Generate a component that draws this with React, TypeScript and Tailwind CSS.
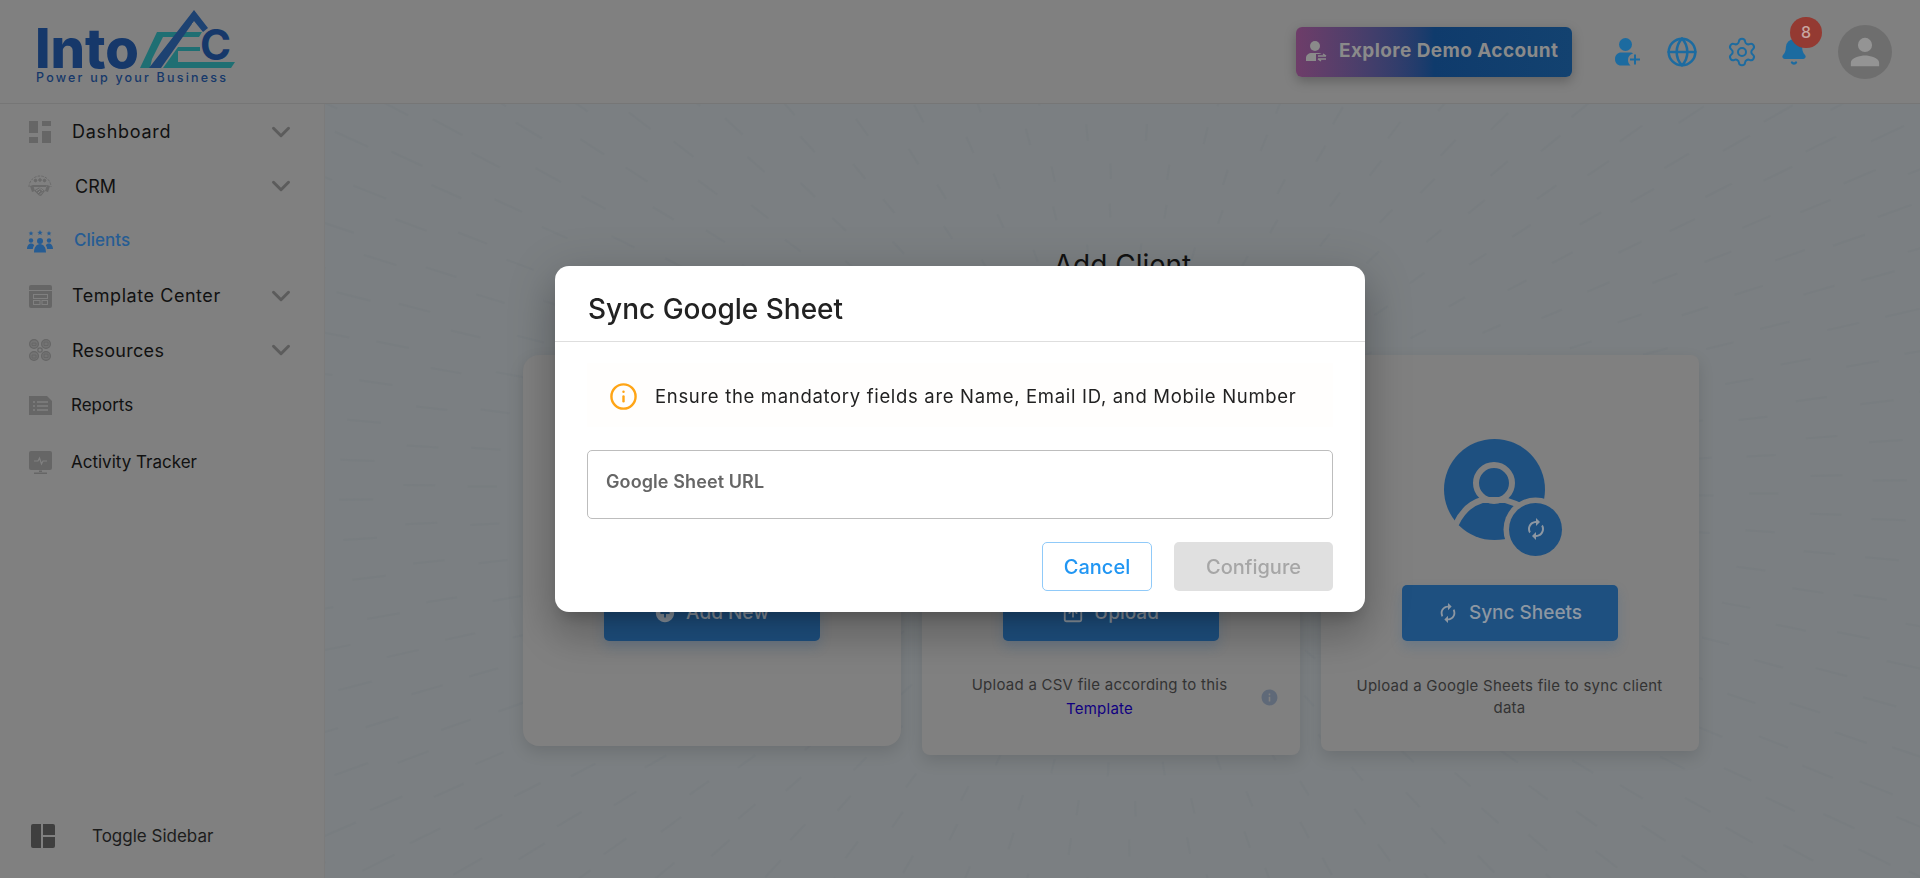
import React from "react";
import { ChevronDown, Globe, Settings, Bell, Info, SquareArrowUp } from "lucide-react";
import { MdSync, MdAddCircle, MdInfo } from "react-icons/md";

function DashIcon() {
  return (
    <svg viewBox="0 0 22 22" className="w-[22px] h-[22px]" fill="#666">
      <rect x="0" y="0" width="9" height="12" />
      <rect x="13" y="0" width="9" height="5" />
      <rect x="0" y="16" width="9" height="6" />
      <rect x="13" y="10" width="9" height="12" />
    </svg>
  );
}

function CrmIcon() {
  return (
    <svg viewBox="0 0 26 26" className="w-[26px] h-[26px]" fill="none" stroke="#6a6a6a" strokeWidth="1">
      <path d="M2 14a11 11 0 0 1 22 0" strokeDasharray="2.5 1.200" />
      <circle cx="8.500" cy="7.500" r="1.300" fill="#6a6a6a" />
      <circle cx="13" cy="7" r="1.300" fill="#6a6a6a" />
      <circle cx="17.500" cy="7.500" r="1.300" fill="#6a6a6a" />
      <path d="M6 12h14v2H6zM3 13l3-1 2 6-3 1zM23 13l-3-1-2 6 3 1z" fill="#6a6a6a" stroke="none" />
      <path d="M8 17l4-2.500 2 .5 4 3-4 5-2-.5-4-4z" fill="#6a6a6a" stroke="none" />
      <path d="M9 18l4-2.500 3 2.500M11 20l2-2M13 21.500l2-2" stroke="#8c8c8c" strokeWidth="0.800" />
    </svg>
  );
}

function ClientsIcon() {
  return (
    <svg viewBox="0 0 26 26" className="w-[26px] h-[26px]" fill="#265c93">
      <path d="M4 4l.7 1.600 1.700.1-1.300 1.100.4 1.700L4 7.600l-1.500.9.4-1.700L1.600 5.700l1.700-.1zM13 3l.8 1.800 1.900.1-1.500 1.200.5 1.900-1.700-1-1.700 1 .5-1.900-1.500-1.200 1.900-.1zM22 4l.7 1.600 1.700.1-1.300 1.100.4 1.700-1.500-.9-1.500.9.4-1.700-1.300-1.100 1.700-.1z" />
      <circle cx="4" cy="13.500" r="2.200" />
      <circle cx="22" cy="13.500" r="2.200" />
      <circle cx="13" cy="14" r="3" />
      <path d="M0 22c0-3 1.500-5.500 4-5.500 1.500 0 2.500.7 3.200 1.700-.8 1.200-1.200 2.300-1.400 3.800zM26 22c0-3-1.500-5.500-4-5.500-1.500 0-2.500.7-3.200 1.700.8 1.200 1.200 2.300 1.400 3.800zM7 25.500c0-5 2.500-8.500 6-8.500s6 3.500 6 8.500z" />
    </svg>
  );
}

function TemplateIcon() {
  return (
    <svg viewBox="0 0 23 23" className="w-[23px] h-[23px]">
      <rect x="0" y="0" width="23" height="23" rx="2" fill="#666" />
      <rect x="0" y="5" width="23" height="1" fill="#808080" />
      <rect x="4.500" y="9.500" width="14" height="4" fill="none" stroke="#808080" />
      <rect x="4.500" y="15.500" width="6.500" height="4" fill="none" stroke="#808080" />
      <rect x="13" y="15.500" width="5.500" height="4" fill="none" stroke="#808080" />
    </svg>
  );
}

function ResourcesIcon() {
  return (
    <svg viewBox="0 0 22 22" className="w-[22px] h-[22px]" fill="none" stroke="#666" strokeWidth="1.200">
      <circle cx="5" cy="5" r="4.400" fill="#747474" />
      <circle cx="17" cy="5" r="4.400" fill="#747474" />
      <circle cx="5" cy="17" r="4.400" fill="#747474" />
      <circle cx="17" cy="17" r="4.400" fill="#747474" />
      <circle cx="11" cy="11" r="2.200" fill="#808080" />
      <path d="M3 4h4v2.500H3zM15 3h4v3.500h-4zM3 16h4v3H3zM15 15h4v3.500h-4z" strokeWidth="0.900" />
    </svg>
  );
}

function ReportsIcon() {
  return (
    <svg viewBox="0 0 23 19" className="w-[23px] h-[19px]">
      <path d="M0 0h18l5 5v14H0z" fill="#666" />
      <path d="M4 6h2M8 6h11M4 10h2M8 10h11M4 14h2M8 14h11" stroke="#808080" strokeWidth="1.500" />
    </svg>
  );
}

function ActivityIcon() {
  return (
    <svg viewBox="0 0 23 23" className="w-[23px] h-[23px]">
      <rect x="0" y="0" width="23" height="19" rx="2" fill="#666" />
      <path d="M5 10h4l1.500-3 2 6 1.500-3h4" fill="none" stroke="#808080" strokeWidth="1.200" />
      <path d="M10 19.500h3v1.500h-3zM5 21.500h13v1.500H5z" fill="#666" />
    </svg>
  );
}

function ToggleIcon() {
  return (
    <svg viewBox="0 0 24 24" className="w-[24px] h-[24px]" fill="#3f3f3f">
      <path d="M2 0h8v24H2a2 2 0 0 1-2-2V2a2 2 0 0 1 2-2zM12 0h10a2 2 0 0 1 2 2v9H12zM12 13h12v9a2 2 0 0 1-2 2H12z" />
    </svg>
  );
}

function PersonIcon({ className, fill }: { className: string; fill: string }) {
  return (
    <svg viewBox="0 0 24 24" className={className} fill={fill}>
      <path d="M12 12a5 5 0 1 0 0-10 5 5 0 0 0 0 10zm0 2.500c-3.300 0-10 1.700-10 5V22h20v-2.500c0-3.300-6.700-5-10-5z" />
    </svg>
  );
}

function PersonPlusIcon() {
  return (
    <svg viewBox="0 0 26 28" className="w-[26px] h-[28px]" fill="#1c6ba0">
      <circle cx="10.500" cy="6.500" r="6.500" />
      <path d="M0 21c0-4 3-6.500 6-6.500h9c1.500 0 2.500.4 3 1-3.500 1-5 3.500-5 6.500 0 2 .8 4 2.500 5.500H6c-3.500 0-6-2.500-6-6.500z" />
      <path d="M20 16.500v10M15 21.500h10" stroke="#1c6ba0" strokeWidth="2" />
    </svg>
  );
}

function DemoIcon() {
  return (
    <svg viewBox="0 0 21 21" className="w-[21px] h-[21px]" fill="#8a8a8a">
      <circle cx="9" cy="5" r="5" />
      <path d="M0 20v-3c0-3 2.500-5 6-5h6c1.500 0 2.500.3 3.500 1H10v7z" />
      <path d="M12 15h8M17 13l3 2M20 18h-8M15 20l-3-2" stroke="#8a8a8a" strokeWidth="1.500" fill="none" />
    </svg>
  );
}

// coordinates in this viewBox are the page's own pixels
function Logo() {
  return (
    <svg viewBox="34 5 210 85" className="w-[210px] h-[85px] self-start mt-[5px]">
      <text x="35" y="68" fontFamily="Inter, sans-serif" fontWeight="800" fontSize="55" fill="#16386a" textLength="104" lengthAdjust="spacingAndGlyphs">
        Into
      </text>
      <polygon points="140,68 157,32 202,32 199,37 163,37 152,59 150,68" fill="#1f6f73" />
      <polygon points="163,68 178,47 178,68" fill="#1f6f73" />
      <polygon points="178,47 200,47 200,51 178,51" fill="#1f6f73" />
      <polygon points="178,62 235,62 231,68 178,68" fill="#1f6f73" />
      <polygon points="149,68 194,10 208,28 203,32 194,21 161,68" fill="#1d4272" />
      <rect x="192" y="23" width="3" height="3" fill="#808080" />
      <text x="200" y="60" fontFamily="Inter, sans-serif" fontWeight="700" fontSize="42" fill="#16386a">
        C
      </text>
      <text x="36" y="82" fontFamily="Inter, sans-serif" fontWeight="500" fontSize="12.500" fill="#16386a" textLength="190">
        Power up your Business
      </text>
    </svg>
  );
}

const navItems = [
  { label: "Dashboard", icon: <DashIcon />, arrow: true, text: "pl-[19px] pb-[2px] text-[18px] tracking-[0.7px]", h: "h-[54px]" },
  { label: "CRM", icon: <CrmIcon />, arrow: true, text: "pl-[22px] text-[18px]", h: "h-[54px]" },
  { label: "Clients", icon: <ClientsIcon />, active: true, text: "pl-[21px] pt-[2px] text-[17px]", h: "h-[54px]" },
  { label: "Template Center", icon: <TemplateIcon />, arrow: true, text: "pl-[19px] pb-[1px] text-[18px] tracking-[0.55px]", h: "h-[58px]" },
  { label: "Resources", icon: <ResourcesIcon />, arrow: true, text: "pl-[19px] text-[18px] tracking-[0.3px]", h: "h-[50px]" },
  { label: "Reports", icon: <ReportsIcon />, text: "pl-[18px] pt-[2px] text-[17px]", h: "h-[60px]" },
  { label: "Activity Tracker", icon: <ActivityIcon />, text: "pl-[18px] pt-[2px] text-[17px]", h: "h-[54px]" },
];

function Sidebar() {
  return (
    <aside className="w-[325px] shrink-0 bg-[#808080] border-r border-[#7b7b7b] flex flex-col justify-between pt-[1px] pb-[29px]">
      <nav>
        {navItems.map((item) => (
          <div key={item.label} className={`flex items-center pl-[27px] pr-[28px] ${item.h}`}>
            <span className="w-[26px] flex justify-center shrink-0">{item.icon}</span>
            <span className={`flex-1 ${item.text} ${item.active ? "text-[#265c93] font-medium" : "text-[#111]"}`}>
              {item.label}
            </span>
            {item.arrow && <ChevronDown size={30} strokeWidth={2.4} className="text-[#5c5c5c]" />}
          </div>
        ))}
      </nav>
      <div className="flex items-center pl-[31px]">
        <ToggleIcon />
        <span className="pl-[37px] text-[17px] text-[#1c1c1c]">Toggle Sidebar</span>
      </div>
    </aside>
  );
}

function Header() {
  return (
    <header className="h-[104px] shrink-0 bg-[#808080] border-b border-[#767676] flex items-center justify-between pl-[34px] pr-[28px]">
      <Logo />
      <div className="flex items-center">
        <button className="w-[276px] h-[50px] rounded-[6px] bg-gradient-to-r from-[#6e3d69] via-[#0f3b6c] to-[#134270] flex items-center gap-[12px] pl-[10px] shadow-[0_4px_12px_rgba(0,0,0,0.25)]">
          <DemoIcon />
          <span className="text-[19px] tracking-[0.4px] font-bold text-[#8a8a8a] whitespace-nowrap">Explore Demo Account</span>
        </button>
        <span className="ml-[43px]">
          <PersonPlusIcon />
        </span>
        <Globe size={32} strokeWidth={1.900} className="text-[#1c6ba0] ml-[25px]" />
        <Settings size={32} strokeWidth={1.500} className="text-[#1c6ba0] ml-[28px]" />
        <div className="relative ml-[22px]">
          <Bell size={28} fill="#1c6ba0" className="text-[#1c6ba0]" />
          <span className="absolute -top-[21px] left-[10px] w-[32px] h-[31px] rounded-full bg-[#943a32] text-[#c8a5a0] text-[16px] font-medium flex items-center justify-center">
            8
          </span>
        </div>
        <div className="ml-[30px] w-[54px] h-[54px] rounded-full bg-[#6e6e6e] flex items-center justify-center">
          <PersonIcon className="w-[34px] h-[34px]" fill="#949494" />
        </div>
      </div>
    </header>
  );
}

function Card({ className, icon, button, children }: { className: string; icon?: React.ReactNode; button: React.ReactNode; children?: React.ReactNode }) {
  return (
    <div className={`w-[378px] bg-[#808080] shadow-[0_6px_16px_rgba(0,0,0,0.12)] flex flex-col items-center pt-[85px] ${className}`}>
      <div className="h-[100px] flex items-center justify-center">{icon}</div>
      <button className="mt-[45px] w-[216px] h-[56px] rounded-[5px] bg-[#1e5080] text-[#8d97a2] text-[19px] font-medium flex items-center justify-center gap-[10px] shadow-[0_6px_12px_rgba(30,90,150,0.22)]">
        {button}
      </button>
      {children}
    </div>
  );
}

function SyncAvatar() {
  return (
    <svg viewBox="1440 435 125 125" className="w-[125px] h-[125px] self-start ml-[119px] -mt-[5px] shrink-0">
      <circle cx="1494.500" cy="489.500" r="50.500" fill="#1e5080" />
      <circle cx="1494" cy="483" r="18" fill="#1e5080" stroke="#808080" strokeWidth="6" />
      <path d="M1456 524Q1465 505 1482 500L1505 500Q1515 503 1525 508" fill="none" stroke="#808080" strokeWidth="6" />
      <circle cx="1535.500" cy="529.500" r="32" fill="#808080" />
      <circle cx="1535.500" cy="529.500" r="26.500" fill="#1e5080" />
    </svg>
  );
}

// faint radial dashes of the page background
const dashes: { x1: number; y1: number; x2: number; y2: number }[] = [];
for (let ring = 0; ring < 16; ring++) {
  const r = 130 + ring * 62;
  const count = 26 + ring * 5;
  for (let i = 0; i < count; i++) {
    const a = (i / count) * Math.PI * 2 + ring * 0.37;
    const len = 10 + ring * 2.4;
    const x = 798 + Math.cos(a) * r;
    const y = 386 + Math.sin(a) * r * 0.62;
    const dx = Math.cos(a);
    const dy = Math.sin(a) * 0.62;
    dashes.push({ x1: x, y1: y, x2: x + dx * len, y2: y + dy * len });
  }
}

function Main() {
  return (
    <main className="flex-1 relative overflow-hidden bg-[#7b7f82] flex flex-col items-center pt-[145px]">
      <svg className="absolute inset-0 w-full h-full pointer-events-none" aria-hidden="true">
        {dashes.map((d, i) => (
          <line key={i} x1={d.x1} y1={d.y1} x2={d.x2} y2={d.y2} stroke="#6d7175" strokeOpacity="0.14" strokeWidth="2" />
        ))}
      </svg>
      <h1 className="relative text-[28px] leading-[32px] text-[#111]">Add Client</h1>
      <div className="relative flex items-start gap-[21px] mt-[74px] ml-[-24px]">
        <Card className="h-[391px] rounded-[16px]" button={<><MdAddCircle size={22} /> Add New</>} />
        <Card className="h-[400px] rounded-[8px]" button={<><SquareArrowUp size={22} /> Upload</>}>
          <div className="relative w-full pr-[22px] mt-[32px] text-center text-[15px] tracking-[0.25px] leading-[24px] text-[#333]">
            <p>Upload a CSV file according to this</p>
            <a className="text-[#100080]">Template</a>
            <MdInfo size={19} className="absolute right-[21px] top-[15px] text-[#5f6978]" />
          </div>
        </Card>
        <Card
          className="h-[396px] rounded-[8px]"
          icon={
            <div className="relative w-[378px] h-[100px] flex">
              <SyncAvatar />
              <MdSync size={24} className="absolute left-[203px] top-[77px] -scale-x-100 text-[#8d97a2]" />
            </div>
          }
          button={<><MdSync size={22} className="-scale-x-100" /> Sync Sheets</>}
        >
          <p className="w-full px-[30px] mt-[34px] text-center text-[15px] tracking-[0.25px] leading-[22px] text-[#333]">
            Upload a Google Sheets file to sync client data
          </p>
        </Card>
      </div>
    </main>
  );
}

function SyncModal() {
  return (
    <div className="fixed inset-0 flex items-start justify-center pt-[266px]">
      <div className="w-[810px] h-[346px] bg-white rounded-[14px] shadow-[0_11px_15px_-7px_rgba(0,0,0,0.2),0_24px_38px_3px_rgba(0,0,0,0.14),0_9px_46px_8px_rgba(0,0,0,0.12)]">
        <div className="h-[76px] border-b border-[#dedede] flex items-center pl-[33px] pt-[10px] text-[28px] font-medium text-[#222]">
          Sync Google Sheet
        </div>
        <div className="px-[32px] pt-[21px]">
          <div className="h-[64px] bg-[#fffefd] flex items-center pl-[22px] gap-[17px] pt-[3px] text-[18.5px] tracking-[0.68px] text-[#222] whitespace-nowrap">
            <Info size={29} strokeWidth={2} className="text-[#ffa516] shrink-0" />
            <span>Ensure the mandatory fields are Name, Email ID, and Mobile Number</span>
          </div>
          <div className="mt-[23px] h-[69px] rounded-[5px] border border-[#bdbdbd] pl-[18px] pt-[17px] text-[18px] tracking-[0.1px] font-semibold text-[#666]">
            Google Sheet URL
          </div>
          <div className="flex justify-end gap-[22px] mt-[23px]">
            <button className="w-[110px] h-[49px] rounded-[5px] border border-[#90caf9] text-[#2196f3] text-[20px] font-medium">Cancel</button>
            <button className="w-[159px] h-[49px] rounded-[5px] bg-[#e0e0e0] text-[#a6a6a6] text-[20px] font-medium">Configure</button>
          </div>
        </div>
      </div>
    </div>
  );
}

export default function App() {
  return (
    <div className="w-[1920px] h-[878px] overflow-hidden relative flex flex-col font-['Inter','Noto_Sans',sans-serif]">
      <Header />
      <div className="flex-1 flex min-h-0">
        <Sidebar />
        <Main />
      </div>
      <SyncModal />
    </div>
  );
}
